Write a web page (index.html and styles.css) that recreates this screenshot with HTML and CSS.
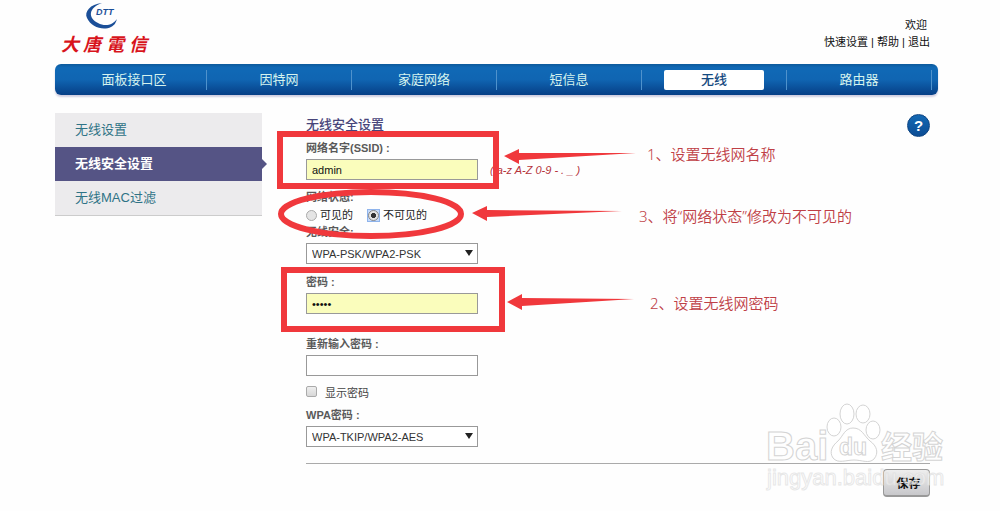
FILE: index.html
```html
<!DOCTYPE html>
<html lang="zh-CN">

<head>
    <meta charset="UTF-8">
    <meta name="viewport" content="width=device-width, initial-scale=1.0">
    <title>无线安全设置</title>
    <link rel="stylesheet" href="styles.css">
</head>

<body>
    <div class="page">
        <header class="header">
            <svg class="logo" width="100" height="60" viewBox="55 0 100 60" role="img" aria-label="大唐電信">
                <path d="M102 3 C90 4 84 12 87 18 C91 27 103 31 111 27 C115 25 116 22 117 19 C113 25 105 27 98 23 C88 18 88 8 102 3 Z" fill="#1b4f98" />
                <text class="logo-en" x="96" y="15">DTT</text>
                <text class="logo-cn" x="61 83 106 129" y="51">大唐電信</text>
            </svg>
            <div class="user">
                <p class="welcome">欢迎</p>
                <p class="links"><a href="#">快速设置</a> | <a href="#">帮助</a> | <a href="#">退出</a></p>
            </div>
        </header>

        <nav class="nav">
            <a href="#"><span>面板接口区</span></a>
            <a href="#"><span>因特网</span></a>
            <a href="#"><span>家庭网络</span></a>
            <a href="#"><span>短信息</span></a>
            <a href="#" class="active"><span>无线</span></a>
            <a href="#"><span>路由器</span></a>
        </nav>

        <div class="content">
            <aside class="sidebar">
                <a href="#">无线设置</a>
                <a href="#" class="current">无线安全设置</a>
                <a href="#">无线MAC过滤</a>
            </aside>

            <form class="settings">
                <div class="title">
                    <h1>无线安全设置</h1>
                    <button type="button" class="help" aria-label="帮助">?</button>
                </div>

                <div class="field">
                    <label class="name" for="ssid">网络名字(SSID) :</label>
                    <div class="row">
                        <input class="box filled" type="text" id="ssid" value="admin">
                        <span class="hint">( a-z A-Z 0-9 - . _ )</span>
                    </div>
                </div>

                <fieldset class="field status">
                    <legend class="name">网络状态:</legend>
                    <div class="radios">
                        <label><input type="radio" name="status"> 可见的</label>
                        <label><span class="focus"><input type="radio" name="status" checked></span> 不可见的</label>
                    </div>
                </fieldset>

                <div class="field security">
                    <label class="name" for="security">无线安全:</label>
                    <div class="select">
                        <select class="box" id="security">
                            <option>WPA-PSK/WPA2-PSK</option>
                        </select>
                    </div>
                </div>

                <div class="field">
                    <label class="name" for="password">密码 :</label>
                    <input class="box filled" type="password" id="password" value="admin">
                </div>

                <div class="field repeat">
                    <label class="name" for="password2">重新输入密码 :</label>
                    <input class="box" type="password" id="password2">
                </div>

                <label class="show"><input type="checkbox"> 显示密码</label>

                <div class="field cipher">
                    <label class="name" for="cipher">WPA密码 :</label>
                    <div class="select">
                        <select class="box" id="cipher">
                            <option>WPA-TKIP/WPA2-AES</option>
                        </select>
                    </div>
                </div>

                <div class="actions">
                    <button type="submit" class="save">保存</button>
                </div>
            </form>
        </div>

        <!-- red marks and steps -->
        <svg class="marks" width="900" height="340" viewBox="0 0 900 340">
            <g fill="none" stroke="#f0383c" stroke-width="6">
                <rect x="280" y="134" width="216" height="52" />
                <ellipse cx="371" cy="214" rx="90" ry="22" />
                <rect x="284" y="270" width="218" height="59" />
            </g>
            <g fill="#f0383c">
                <path d="M504 156 L519 149 V153 L636 153 L519 160 V164 Z" />
                <path d="M472 213 L487 206 V210 L622 211 L487 217 V221 Z" />
                <path d="M507 302 L522 294 V298 L634 299 L522 306 V310 Z" />
            </g>
            <text x="647" y="160">1、设置无线网名称</text>
            <text x="639" y="222">3、将“网络状态”修改为不可见的</text>
            <text x="650" y="309">2、设置无线网密码</text>
        </svg>

        <!-- watermark -->
        <svg class="watermark" width="180" height="95" viewBox="765 400 180 95">
            <text x="766" y="460" font-size="40">Bai</text>
            <ellipse cx="834" cy="427" rx="7" ry="9" />
            <ellipse cx="847" cy="414" rx="7" ry="10" />
            <ellipse cx="863" cy="414" rx="7" ry="9" />
            <ellipse cx="873" cy="430" rx="7" ry="9" />
            <path d="M853 428 C845 428 843 436 838 441 C832 446 829 452 833 458 C838 464 846 460 854 460 C862 460 869 464 874 459 C879 453 877 446 870 441 C864 436 862 428 853 428 Z" />
            <text x="839" y="455" font-size="23">du</text>
            <text x="881" y="458" font-size="31">经验</text>
            <text class="url" x="767" y="485" font-size="22">jingyan.baidu.com</text>
        </svg>
    </div>
</body>

</html>
```

FILE: styles.css
```css
* {
    margin: 0;
    padding: 0;
    box-sizing: border-box;
}

body {
    background: #fefefe;
    color: #444;
    font-family: "Liberation Sans", "Noto Sans CJK SC", sans-serif;
    font-size: 11px;
}

a {
    color: inherit;
    text-decoration: none;
}

.page {
    position: relative;
    padding: 0 62px 0 55px;
}

.header {
    display: flex;
    justify-content: space-between;
    height: 64px;
}

.logo-en {
    font-size: 9px;
    font-weight: bold;
    font-style: italic;
    fill: #1b4f98;
}

.logo-cn {
    font-size: 18px;
    font-weight: bold;
    font-style: italic;
    fill: #d8141c;
}

.user {
    padding: 17px 8px 0 0;
    color: #111;
    line-height: 17px;
    text-align: right;
}

.welcome {
    padding-right: 3px;
}

.nav {
    display: grid;
    grid-template-columns: repeat(6, 1fr);
    align-items: center;
    height: 31px;
    padding: 0 6px 0 7px;
    border-radius: 6px;
    background: linear-gradient(#0d5a9c, #1069b6 12%, #1065b2 50%, #063f86);
    box-shadow: 0 2px 2px #cfcde0;
}

.nav a {
    display: flex;
    justify-content: center;
    border-right: 1px solid #4f92cc;
    color: #d5f3ee;
    font-size: 13px;
    line-height: 20px;
}

.nav .active span {
    width: 70%;
    border-radius: 2px;
    background: #fff;
    color: #154a80;
    font-weight: 500;
    text-align: center;
}

.content {
    display: flex;
    align-items: flex-start;
    gap: 44px;
    margin-top: 18px;
    padding-right: 8px;
}

.sidebar {
    width: 207px;
    flex-shrink: 0;
    border-bottom: 1px solid #ccc;
    background: #ecebed;
}

.sidebar a {
    display: block;
    padding-left: 20px;
    color: #2f7386;
    font-size: 13px;
    line-height: 34px;
}

.sidebar .current {
    position: relative;
    background: #555485;
    color: #fff;
    font-weight: bold;
}

.sidebar .current::after {
    content: "";
    position: absolute;
    left: 100%;
    top: 12px;
    border: 5px solid transparent;
    border-left-color: #555485;
}

.settings {
    flex: 1;
}

.title {
    display: flex;
    align-items: center;
    justify-content: space-between;
    height: 25px;
}

.title h1 {
    color: #48457a;
    font-size: 13px;
    font-weight: 500;
    line-height: 25px;
    height: 27px;
}

.help {
    width: 23px;
    height: 23px;
    border: 1px solid #0c4382;
    border-radius: 50%;
    background: linear-gradient(#1469b4, #0b4c94);
    color: #fff;
    font-family: inherit;
    font-size: 15px;
    font-weight: bold;
}

.field {
    margin-top: 8px;
    border: none;
}

.title + .field {
    margin-top: 0;
}

.name {
    display: block;
    margin-bottom: 1px;
    color: #5a5a5a;
    font-weight: bold;
    line-height: 20px;
}

.row {
    display: flex;
    align-items: center;
    gap: 12px;
}

.box {
    display: block;
    width: 172px;
    height: 21px;
    padding: 0 5px;
    border: 1px solid #999;
    background: #fff;
    color: #333;
    font-family: inherit;
    font-size: 11px;
    appearance: none;
}

.filled {
    background: #fafdbc;
    color: #111;
}

.hint {
    color: #b5343c;
    font-style: italic;
}

.status {
    margin-top: 7px;
}

.radios {
    display: flex;
    gap: 14px;
    color: #222;
    line-height: 14px;
}

.radios label {
    display: flex;
    align-items: center;
    gap: 3px;
}

.radios input {
    display: block;
    width: 11px;
    height: 11px;
    border: 1px solid #aaa;
    border-radius: 50%;
    background: #e4e4e4;
    appearance: none;
}

.radios input:checked {
    border-color: #888;
    background: radial-gradient(#333 35%, #e4e4e4 45%);
}

.radios .focus {
    padding: 0;
    border: 1px solid #8fb4ec;
    background: #c5dafa;
}

.security {
    margin-top: 0;
}

.select {
    position: relative;
    width: 172px;
}

.select::after {
    content: "";
    position: absolute;
    right: 5px;
    top: 7px;
    border: 4px solid transparent;
    border-top: 6px solid #222;
    border-bottom: none;
    pointer-events: none;
}

.repeat {
    margin-top: 20px;
}

.show {
    display: flex;
    gap: 8px;
    width: 172px;
    margin-top: 7px;
    line-height: 20px;
}

.show input {
    width: 11px;
    height: 11px;
    margin-top: 3px;
    border: 1px solid #aaa;
    border-radius: 2px;
    background: linear-gradient(#eee, #d8d8d8);
    appearance: none;
}

.cipher {
    margin-top: 2px;
}

.actions {
    display: flex;
    justify-content: flex-end;
    margin-top: 16px;
    padding-top: 5px;
    border-top: 1px solid #aaa;
}

.save {
    width: 47px;
    height: 28px;
    padding-left: 4px;
    border: 1px solid #999;
    border-bottom-width: 2px;
    border-radius: 4px;
    background: linear-gradient(#eee, #c8c8cb);
    color: #111;
    font-family: inherit;
    font-size: 12px;
    font-weight: bold;
}

.marks {
    position: absolute;
    left: 0;
    top: 0;
    pointer-events: none;
}

.marks text {
    fill: #bf4046;
    font-family: "Noto Sans", "Noto Sans CJK SC", sans-serif;
    font-size: 15px;
    font-weight: 350;
}

.watermark {
    position: absolute;
    right: 55px;
    top: 400px;
    fill: #fff;
    fill-opacity: 0.7;
    stroke: #d4d4d4;
    stroke-width: 1;
    pointer-events: none;
}

.watermark text {
    font-weight: bold;
}

.watermark .url {
    fill-opacity: 0.5;
    font-weight: normal;
    stroke: #ddd;
    stroke-opacity: 0.7;
}
```
